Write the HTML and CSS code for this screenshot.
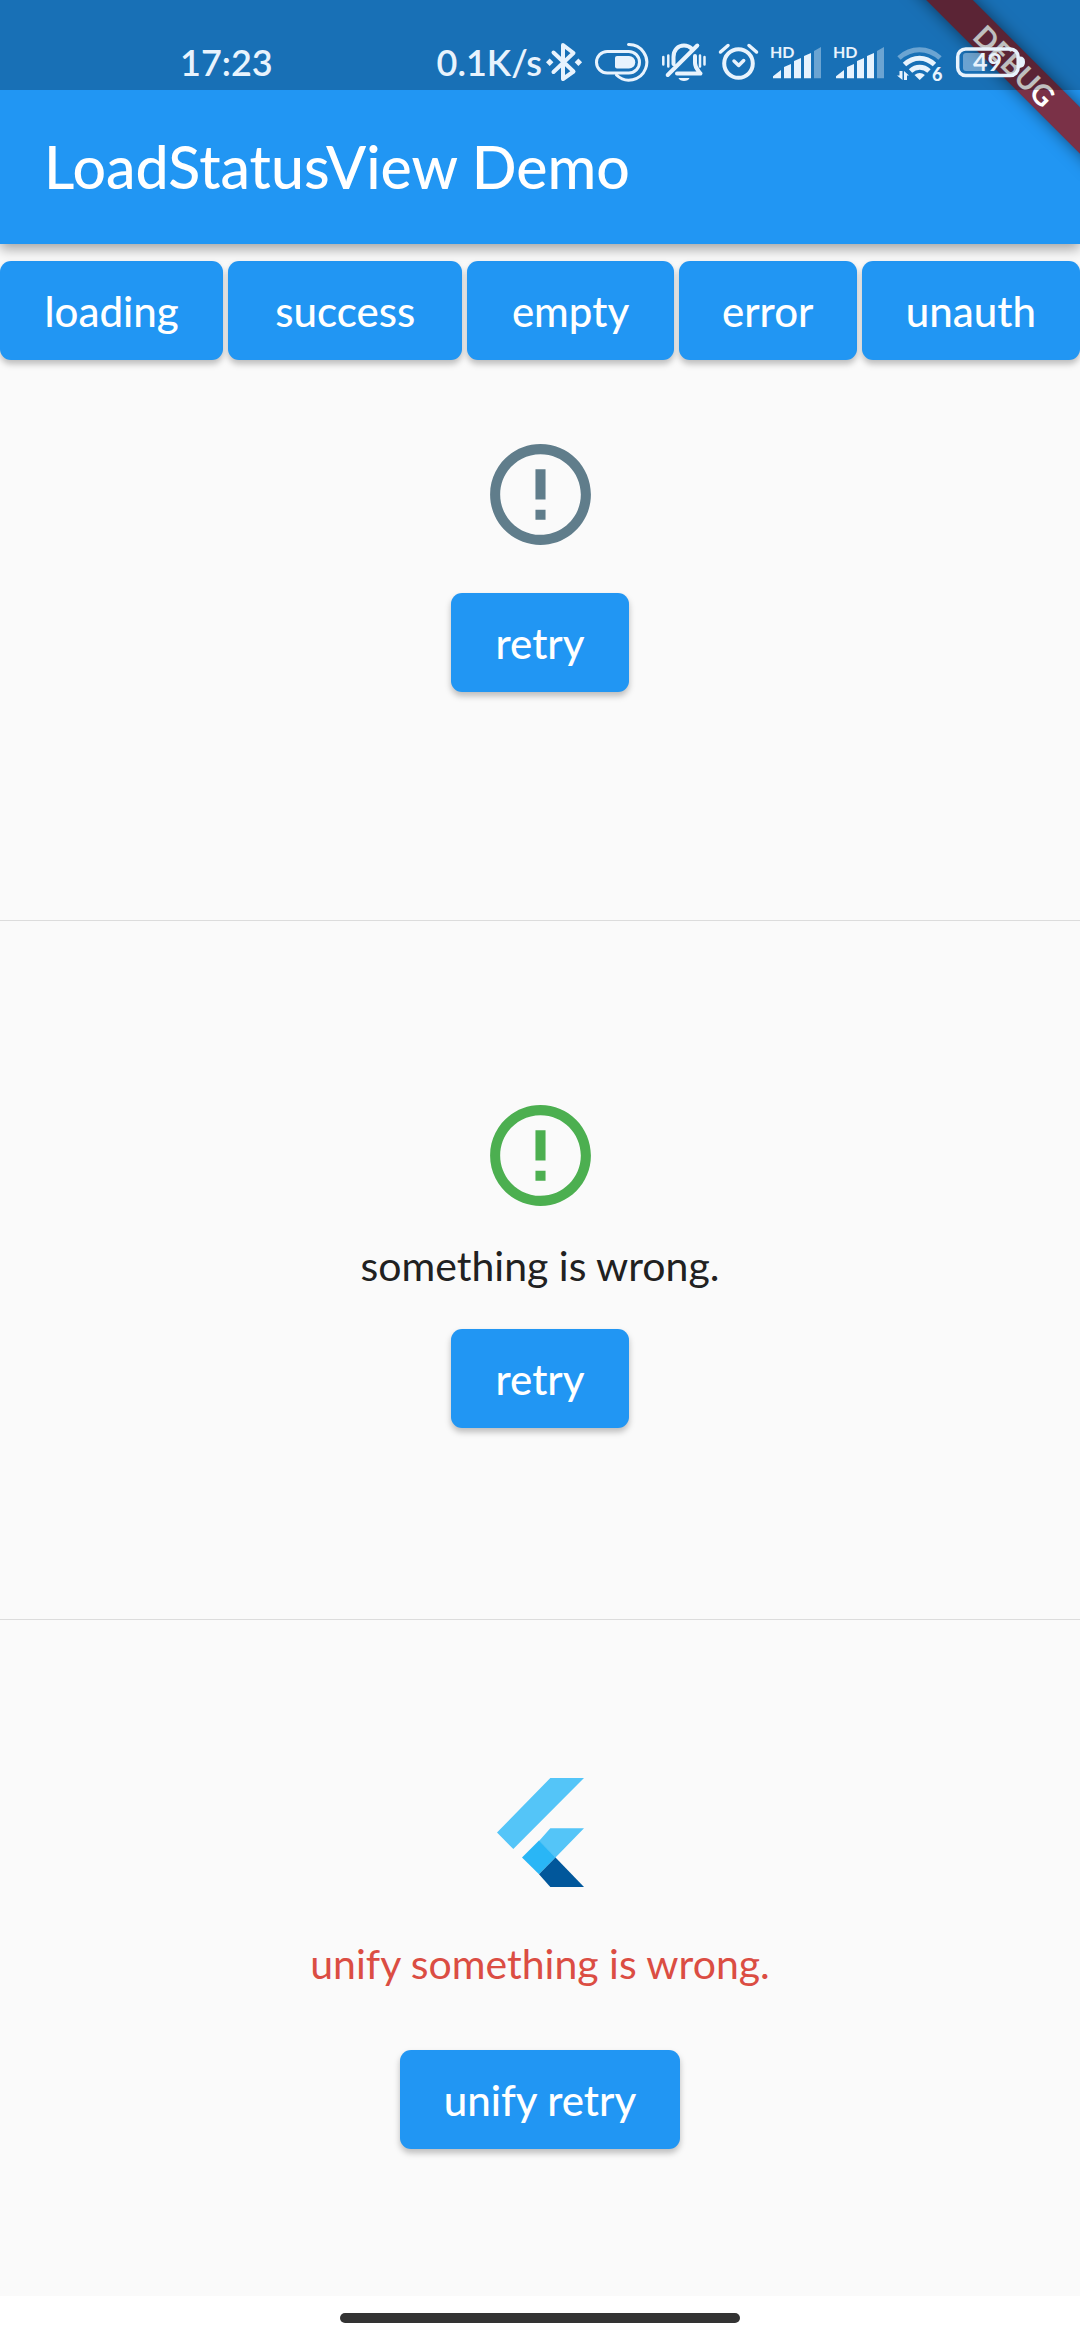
FILE: index.html
```
<!DOCTYPE html>
<html lang="en">
<head>
<meta charset="utf-8">
<meta name="viewport" content="width=device-width, initial-scale=1">
<title>LoadStatusView Demo</title>
<link rel="stylesheet" href="styles.css">
</head>
<body class="screen">
<header class="header">
  <div class="status-bar">
    <span class="clock">17:23</span>
    <div class="indicators">
      <span class="speed">0.1K/s</span>
      <svg class="glyph" width="38" height="44" viewBox="0 0 38 44" aria-hidden="true">
        <path class="line" stroke-width="4" d="M8.5 12.5 28.5 31.5 18 39V5l10.500 8L8.500 32"/>
        <path d="M4.700 18.600 8.400 22.300 4.700 26 1 22.300zM33.400 18.600 37.100 22.300 33.400 26 29.700 22.300z"/>
      </svg>
      <svg class="glyph" width="56" height="44" viewBox="0 0 56 44" aria-hidden="true">
        <rect class="line" stroke-width="3" x="2.500" y="11.500" width="43" height="21.500" rx="10.700"/>
        <path d="M23 16h12a6.200 6.200 0 0 1 0 12.500H23a2 2 0 0 1-2-2V18a2 2 0 0 1 2-2z"/>
        <path class="line" stroke-width="3" d="M34.500 4.500a17.800 17.800 0 1 1-12 30.500"/>
      </svg>
      <svg class="glyph" width="46" height="44" viewBox="0 0 46 44" aria-hidden="true">
        <path class="line" stroke-width="4" d="M12.500 24v-7C12.500 10 17 5.500 23 5.500c3 0 5.500 1 7.500 3M34 16v7c0 5 3 7 5.500 10.500H16M6.700 35 36.300 5.500"/>
        <path class="line" stroke-width="2.500" d="M2.300 17v7.500M7.300 15.500v11M39 15.500v11M43.500 17v7.500"/>
        <path d="M17.500 38h11c-1 4-10 4-11 0z"/>
      </svg>
      <svg class="glyph" width="41" height="44" viewBox="0 0 41 44" aria-hidden="true">
        <circle class="line" stroke-width="4" cx="20.500" cy="23.500" r="14.300"/>
        <path class="line" stroke-width="3.500" d="m2.500 12 7.500-6.500M31 5.500l7.500 6.500M16 21l4.700 4.500 5-5"/>
      </svg>
      <svg class="glyph" width="52" height="44" viewBox="0 0 52 44" aria-hidden="true">
        <text class="tiny" x="0" y="18">HD</text>
        <path d="M3 38.300v-2l8-6.300v8.300zM14 38.300V27l7-3v14.300zM24 38.300V21l7-3v20.300zM34 38.300V16l7-3v25.300z"/>
        <path class="faint" d="M44 38.300V11l7-4v31.300z"/>
      </svg>
      <svg class="glyph" width="52" height="44" viewBox="0 0 52 44" aria-hidden="true">
        <text class="tiny" x="0" y="18">HD</text>
        <path d="M3 38.300v-2l8-6.300v8.300zM14 38.300V27l7-3v14.300zM24 38.300V21l7-3v20.300zM34 38.300V16l7-3v25.300z"/>
        <path class="faint" d="M44 38.300V11l7-4v31.300z"/>
      </svg>
      <svg class="glyph" width="48" height="44" viewBox="0 0 48 44" aria-hidden="true">
        <g class="wave">
          <path class="line faint-line" d="M3 18c12-11 29-11 41 0"/>
          <path class="line" d="M8.500 24.500c9-8.500 21-8.500 30 0"/>
          <path class="line" d="M14.500 31c5.500-5 13-5 18.500 0"/>
        </g>
        <path d="M18.500 35q5.200-4 10.400 0l-5.200 5z"/>
        <path d="M3.500 31h3v9L1 35.500h2.500zM8 31v9h3v-4.500H13z"/>
        <text class="digit" x="36" y="40.500">6</text>
      </svg>
      <svg class="glyph" width="72" height="44" viewBox="0 0 72 44" aria-hidden="true">
        <rect class="faint" x="8" y="13" width="21" height="18" rx="3"/>
        <rect class="line" stroke-width="3.500" x="2.700" y="9" width="60.500" height="26.500" rx="8"/>
        <path d="M65 16.500q5 0 5 5.500t-5 5.500z"/>
        <text class="level" x="18" y="31">49</text>
      </svg>
    </div>
  </div>
  <h1 class="title">LoadStatusView Demo</h1>
  <div class="banner"><span class="ribbon">DEBUG</span></div>
</header>
<nav class="actions" aria-label="Status">
  <button class="button" type="button">loading</button>
  <button class="button" type="button">success</button>
  <button class="button" type="button">empty</button>
  <button class="button" type="button">error</button>
  <button class="button" type="button">unauth</button>
</nav>
<main class="panels">
  <section class="panel panel-first">
    <svg class="alert alert-grey" viewBox="0 0 24 24" role="img" aria-label="Error"><path d="M11 15h2v2h-2v-2zm0-8h2v6h-2V7zm.99-5C6.470 2 2 6.480 2 12s4.470 10 9.990 10C17.520 22 22 17.520 22 12S17.520 2 11.990 2zM12 20c-4.420 0-8-3.580-8-8s3.580-8 8-8 8 3.580 8 8-3.580 8-8 8z"/></svg>
    <button class="button" type="button">retry</button>
  </section>
  <section class="panel panel-second">
    <svg class="alert alert-green" viewBox="0 0 24 24" role="img" aria-label="Error"><path d="M11 15h2v2h-2v-2zm0-8h2v6h-2V7zm.99-5C6.470 2 2 6.480 2 12s4.470 10 9.990 10C17.520 22 22 17.520 22 12S17.520 2 11.990 2zM12 20c-4.420 0-8-3.580-8-8s3.580-8 8-8 8 3.580 8 8-3.580 8-8 8z"/></svg>
    <p class="message">something is wrong.</p>
    <button class="button" type="button">retry</button>
  </section>
  <section class="panel panel-third">
    <svg class="logo" viewBox="0 0 87 109" role="img" aria-label="Flutter">
      <path fill="#54c5f8" d="M53.300 0H87L16.300 71 0 54.500zM53.300 50.200H87L58.500 79.500 42 63z"/>
      <path fill="#29b6f6" d="M42 62.500 58.700 79.500 42 96.300 25 79.500z"/>
      <path fill="#01579b" d="M58.500 79.500 87 109H53.300L42 96.300z"/>
    </svg>
    <p class="message message-error">unify something is wrong.</p>
    <button class="button" type="button">unify retry</button>
  </section>
</main>
<footer class="home-bar"><span class="home-handle"></span></footer>
</body>
</html>
```
FILE: styles.css
```
* {
  box-sizing: border-box;
}

.screen {
  display: flex;
  flex-direction: column;
  min-height: 100vh;
  margin: 0;
  background: #fafafa;
  color: #212121;
  font-family: Lato, "Noto Sans", sans-serif;
}

/* App bar and system status bar */
.header {
  position: relative;
  z-index: 1;
  background: #2196f3;
  color: #fff;
  box-shadow: 0 5px 12px rgba(0, 0, 0, .35);
}

.status-bar {
  position: relative;
  z-index: 2;
  display: flex;
  justify-content: space-between;
  padding: 40px 53px 6px 180px;
  background: rgba(0, 0, 0, .25);
  color: #e8f3fd;
  font-size: 36px;
  font-weight: 600;
  line-height: 44px;
}

.indicators {
  display: flex;
  gap: 11px;
}

.speed {
  margin-right: -8px;
}

.glyph {
  flex: none;
  fill: currentColor;
}

.line {
  fill: none;
  stroke: currentColor;
  stroke-linecap: round;
  stroke-linejoin: round;
}

.wave .line {
  stroke-width: 5px;
  stroke-linecap: butt;
}

.faint {
  opacity: .4;
}

.wave .faint-line {
  opacity: .4;
}

.tiny {
  font-size: 16px;
  font-weight: 700;
}

.digit {
  font-size: 18px;
  font-weight: 900;
}

.level {
  font-size: 25px;
  font-weight: 700;
}

.title {
  margin: 0;
  padding: 41px 44px;
  font-size: 59px;
  font-weight: 500;
  line-height: 72px;
}

/* Diagonal ribbon over the top right corner */
.banner {
  position: absolute;
  z-index: 1;
  top: 0;
  right: 0;
  width: 190px;
  height: 190px;
  overflow: hidden;
}

.ribbon {
  position: absolute;
  top: 49px;
  right: -65px;
  width: 260px;
  background: #7a3147;
  box-shadow: 0 0 16px rgba(0, 0, 0, .5);
  font-size: 29px;
  font-weight: 700;
  line-height: 33px;
  text-align: center;
  transform: rotate(45deg);
}

/* Buttons */
.actions {
  display: grid;
  grid-template-columns: 223fr 234fr 206fr 178fr 218fr;
  gap: 5px;
  padding: 17px 0;
}

.button {
  padding: 25px 44px 23px;
  border: 0;
  border-radius: 11px;
  background: #2196f3;
  box-shadow: 0 4px 6px rgba(0, 0, 0, .25);
  color: #fff;
  font-family: inherit;
  font-size: 42px;
  font-weight: 500;
  line-height: 51px;
  white-space: nowrap;
}

.actions .button {
  padding: 25px 0 23px;
}

/* Status panels */
.panels {
  display: flex;
  flex: 1;
  flex-direction: column;
}

.panel {
  display: flex;
  flex-direction: column;
  align-items: center;
}

.panel-first {
  gap: 38px;
  padding: 57px 0 228px;
  border-bottom: 1px solid #dcdcdc;
}

.panel-second {
  padding: 174px 0 191px;
  border-bottom: 1px solid #dcdcdc;
}

.panel-third {
  flex: 1;
  padding: 158px 0 147px;
}

.alert {
  width: 121px;
  height: 121px;
}

.alert-grey {
  fill: #607d8b;
}

.alert-green {
  fill: #4caf50;
}

.logo {
  width: 87px;
  height: 109px;
}

.message {
  margin: 22px 0 35px;
  font-size: 41px;
  line-height: 56px;
}

.message-error {
  margin: 49px 0 58px;
  color: #db4d43;
}

/* System gesture bar */
.home-bar {
  display: flex;
  justify-content: center;
  padding: 17px 0;
  background: #fff;
}

.home-handle {
  width: 37%;
  height: 10px;
  border-radius: 5px;
  background: #333;
}
```
